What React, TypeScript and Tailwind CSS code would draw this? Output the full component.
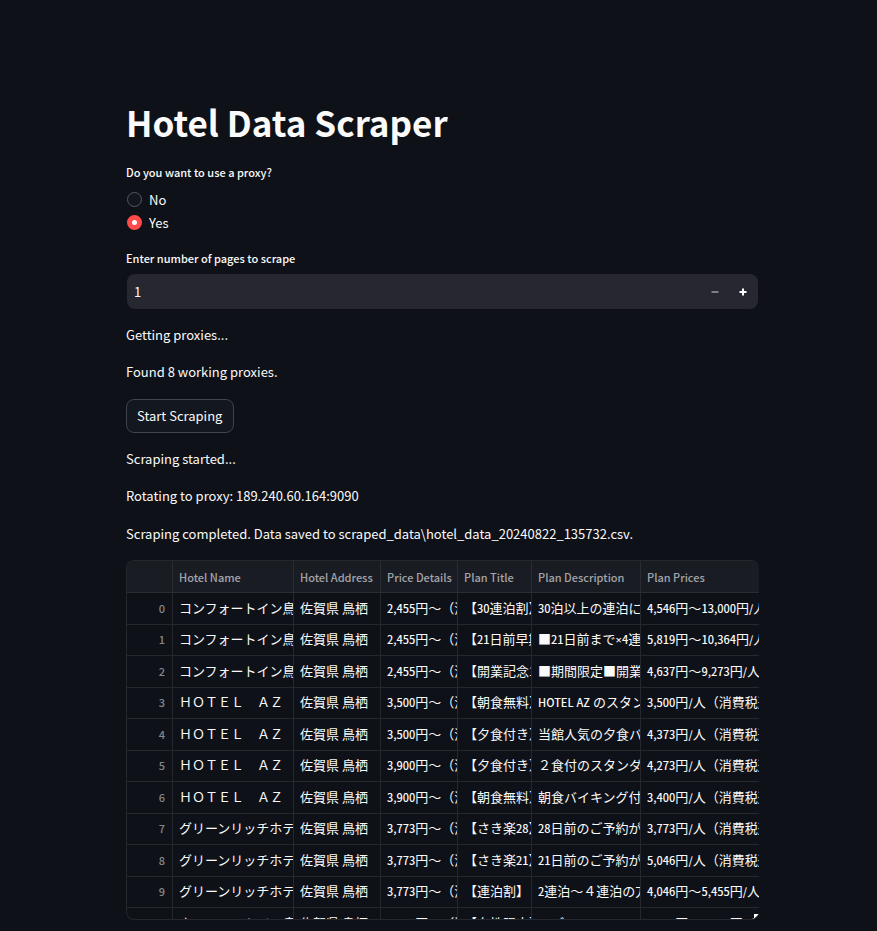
import { useState } from "react";

const columns = ["Hotel Name", "Hotel Address", "Price Details", "Plan Title", "Plan Description", "Plan Prices"];

const address = "佐賀県 鳥栖";
const comfort = "コンフォートイン鳥";
const az = "ＨＯＴＥＬ　ＡＺ";
const green = "グリーンリッチホテ";

const rows: string[][] = [
  [comfort, address, "2,455円〜（消", "【30連泊割】", "30泊以上の連泊に", "4,546円〜13,000円/人"],
  [comfort, address, "2,455円〜（消", "【21日前早期", "■21日前まで×4連泊", "5,819円〜10,364円/人"],
  [comfort, address, "2,455円〜（消", "【開業記念1", "■期間限定■開業記", "4,637円〜9,273円/人"],
  [az, address, "3,500円〜（消", "【朝食無料】", "HOTEL AZ のスタン", "3,500円/人（消費税込"],
  [az, address, "3,500円〜（消", "【夕食付き】", "当館人気の夕食バ", "4,373円/人（消費税込"],
  [az, address, "3,900円〜（消", "【夕食付き】", "２食付のスタンダ", "4,273円/人（消費税込"],
  [az, address, "3,900円〜（消", "【朝食無料】", "朝食バイキング付", "3,400円/人（消費税込"],
  [green, address, "3,773円〜（消", "【さき楽28】", "28日前のご予約が", "3,773円/人（消費税込"],
  [green, address, "3,773円〜（消", "【さき楽21】", "21日前のご予約が", "5,046円/人（消費税込"],
  [green, address, "3,773円〜（消", "【連泊割】", "2連泊〜４連泊の方", "4,046円〜5,455円/人"],
  ["ホテルルートイン鳥", address, "4,000円〜（消", "【女性限定】", "レディース", "4,000円〜6,000円/人"],
];

/** Sets Latin runs a little smaller than the Japanese around them. */
function Mixed({ text }: { text: string }) {
  const runs = text.split(/([\x21-\x7e]+|×)/).filter(Boolean);
  return (
    <>
      {runs.map((run, i) => {
        if (run === "×") {
          return (
            <span key={i} className="font-['Noto_Sans',sans-serif] text-[11px] font-medium">
              {run}
            </span>
          );
        }
        return /^[\x21-\x7e]/.test(run) ? (
          <span key={i} className="text-[11px] font-medium">
            {run}
          </span>
        ) : (
          run
        );
      })}
    </>
  );
}

function RadioOption({ label, checked, onSelect }: { label: string; checked: boolean; onSelect: () => void }) {
  return (
    <label className="flex h-[23px] items-center gap-[7px] text-[13px]">
      <input
        type="radio"
        name="proxy"
        checked={checked}
        onChange={onSelect}
        className="ml-px size-[15px] appearance-none rounded-full border border-[#55575d] bg-[#13161d] checked:border-[5px] checked:border-[#ff4b4b] checked:bg-white"
      />
      {label}
    </label>
  );
}

export default function App() {
  const [proxy, setProxy] = useState("Yes");
  const [pages, setPages] = useState(1);

  return (
    <div className="min-h-screen bg-[#0e1117] font-['Noto_Sans_CJK_JP',sans-serif] text-[13px] leading-[23px] text-[#fafafa]">
      <main className="pt-[98px] pr-[118px] pb-[11px] pl-[126px]">
        <h1 className="text-[35px] leading-[48px] font-bold">Hotel Data Scraper</h1>

        <fieldset className="mt-[15px]">
          <legend className="text-[11px] leading-[22px] font-medium">Do you want to use a proxy?</legend>
          <div className="mt-[5px]">
            <RadioOption label="No" checked={proxy === "No"} onSelect={() => setProxy("No")} />
            <RadioOption label="Yes" checked={proxy === "Yes"} onSelect={() => setProxy("Yes")} />
          </div>
        </fieldset>

        <label htmlFor="pages" className="mt-[13px] block text-[11px] leading-[22px] font-medium">
          Enter number of pages to scrape
        </label>
        <div className="mt-[5px] mr-px ml-px flex h-[35px] items-center overflow-hidden rounded-lg bg-[#262730] pr-px">
          <input
            id="pages"
            type="text"
            inputMode="numeric"
            value={pages}
            onChange={(e) => setPages(Number(e.target.value) || 1)}
            className="h-full min-w-0 flex-1 bg-transparent px-[7px] outline-none"
          />
          <button
            type="button"
            aria-label="Decrease"
            disabled={pages <= 1}
            onClick={() => setPages(pages - 1)}
            className="flex h-full w-7 items-center justify-center text-[#7c7d85]"
          >
            <svg viewBox="0 0 8 8" className="size-2" fill="currentColor">
              <path d="M0.5 3h7v2h-7z" />
            </svg>
          </button>
          <button
            type="button"
            aria-label="Increase"
            onClick={() => setPages(pages + 1)}
            className="flex h-full w-7 items-center justify-center"
          >
            <svg viewBox="0 0 8 8" className="size-2" fill="currentColor">
              <path d="M3 0.5h2V3h2.5v2H5v2.5H3V5H0.5V3H3z" />
            </svg>
          </button>
        </div>

        <p className="mt-[14px]">Getting proxies...</p>
        <p className="mt-[14px]">Found 8 working proxies.</p>
        <button
          type="button"
          className="mt-4 block h-[34px] rounded-lg border border-[#41444c] bg-[#131720] pr-[11px] pl-[10px] leading-[22px]"
        >
          Start Scraping
        </button>
        <p className="mt-[14px]">Scraping started...</p>
        <p className="mt-[14px]">Rotating to proxy: 189.240.60.164:9090</p>
        <p className="mt-[15px]">Scraping completed. Data saved to scraped_data\hotel_data_20240822_135732.csv.</p>

        <div className="relative mt-[15px] h-[360px] overflow-hidden rounded-lg border border-r-0 border-[#26282e]">
          <table className="w-full table-fixed border-separate border-spacing-0 text-left whitespace-nowrap">
            <colgroup>
              <col className="w-[46px]" />
              <col className="w-[121px]" />
              <col className="w-[87px]" />
              <col className="w-[77px]" />
              <col className="w-[74px]" />
              <col className="w-[109px]" />
              <col />
            </colgroup>
            <thead>
              <tr className="h-8 bg-[#1a1c24] text-[11px] leading-[22px] text-[#a3a4a9]">
                <th className="border-r border-b border-[#2a2c32]" />
                {columns.map((name) => (
                  <th
                    key={name}
                    className="overflow-hidden border-r border-b border-[#2a2c32] p-0 pl-[6px] font-medium last:border-r-0"
                  >
                    {name}
                  </th>
                ))}
              </tr>
            </thead>
            <tbody>
              {rows.map((row, i) => (
                <tr key={i} className="h-8 leading-[22px] even:h-[31px]">
                  <th className="border-r border-b border-[#26282e] p-0 pr-[7px] pb-[2px] text-right text-[11px] font-medium text-[#85868b]">
                    {i}
                  </th>
                  {row.map((cell, j) => (
                    <td
                      key={j}
                      className="overflow-hidden border-r border-b border-[#26282e] p-0 pb-[2px] pl-[6px] last:border-r-0"
                    >
                      <Mixed text={cell} />
                    </td>
                  ))}
                </tr>
              ))}
            </tbody>
          </table>
          <svg viewBox="0 0 5 5" className="absolute right-0 bottom-0 size-[5px] text-white" fill="currentColor">
            <path d="M0 0h5L0 5z" />
          </svg>
        </div>
      </main>
    </div>
  );
}
